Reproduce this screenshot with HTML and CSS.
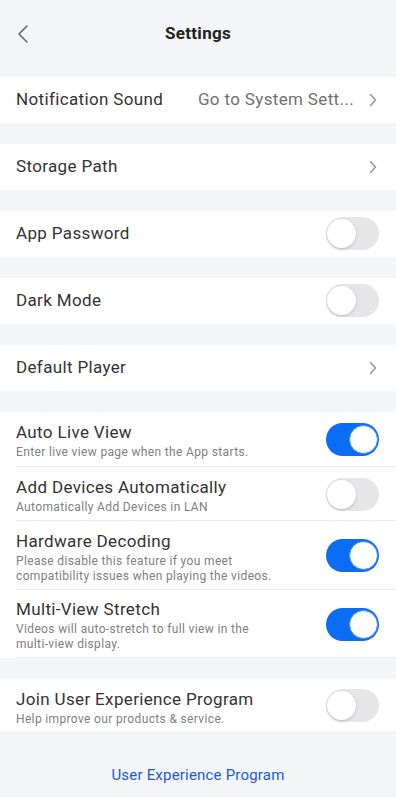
FILE: index.html
```html
<!DOCTYPE html>
<html>
<head>
<meta charset="utf-8">
<link rel="stylesheet" href="styles.css">
</head>
<body>
<div class="page">
  <header class="header">
    <svg class="back" width="12" height="20" viewBox="0 0 12 20"><path d="M10 2 L2 10 L10 18" fill="none" stroke="#666" stroke-width="1.6" stroke-linecap="round" stroke-linejoin="round"/></svg>
    <div class="title">Settings</div>
  </header>

  <section class="group">
    <div class="row">
      <span class="label">Notification Sound</span>
      <span class="value">Go to System Sett...</span>
      <svg class="chev" width="8" height="14" viewBox="0 0 8 14"><path d="M1.5 1.5 L6.5 7 L1.5 12.5" fill="none" stroke="#9896a6" stroke-width="1.6" stroke-linecap="round" stroke-linejoin="round"/></svg>
    </div>
  </section>

  <section class="group">
    <div class="row">
      <span class="label">Storage Path</span>
      <svg class="chev" width="8" height="14" viewBox="0 0 8 14"><path d="M1.5 1.5 L6.5 7 L1.5 12.5" fill="none" stroke="#9896a6" stroke-width="1.6" stroke-linecap="round" stroke-linejoin="round"/></svg>
    </div>
  </section>

  <section class="group">
    <div class="row">
      <span class="label">App Password</span>
      <span class="toggle"><span class="knob"></span></span>
    </div>
  </section>

  <section class="group">
    <div class="row">
      <span class="label">Dark Mode</span>
      <span class="toggle"><span class="knob"></span></span>
    </div>
  </section>

  <section class="group">
    <div class="row">
      <span class="label">Default Player</span>
      <svg class="chev" width="8" height="14" viewBox="0 0 8 14"><path d="M1.5 1.5 L6.5 7 L1.5 12.5" fill="none" stroke="#9896a6" stroke-width="1.6" stroke-linecap="round" stroke-linejoin="round"/></svg>
    </div>
  </section>

  <section class="group">
    <div class="row tall r1 divided">
      <div class="text">
        <div class="label">Auto Live View</div>
        <div class="sub">Enter live view page when the App starts.</div>
      </div>
      <span class="toggle on"><span class="knob"></span></span>
    </div>
    <div class="row tall r2 divided">
      <div class="text">
        <div class="label">Add Devices Automatically</div>
        <div class="sub">Automatically Add Devices in LAN</div>
      </div>
      <span class="toggle"><span class="knob"></span></span>
    </div>
    <div class="row tall r3 divided">
      <div class="text">
        <div class="label">Hardware Decoding</div>
        <div class="sub">Please disable this feature if you meet<br>compatibility issues when playing the videos.</div>
      </div>
      <span class="toggle on"><span class="knob"></span></span>
    </div>
    <div class="row tall r4 divided">
      <div class="text">
        <div class="label">Multi-View Stretch</div>
        <div class="sub">Videos will auto-stretch to full view in the<br>multi-view display.</div>
      </div>
      <span class="toggle on"><span class="knob"></span></span>
    </div>
  </section>

  <section class="group">
    <div class="row tall r5">
      <div class="text">
        <div class="label">Join User Experience Program</div>
        <div class="sub">Help improve our products &amp; service.</div>
      </div>
      <span class="toggle"><span class="knob"></span></span>
    </div>
  </section>

  <div class="footer">
    <a class="link">User Experience Program</a>
  </div>
</div>
</body>
</html>
```

FILE: styles.css
```css
* { box-sizing: border-box; }
html, body {
  margin: 0;
  padding: 0;
  background: #f4f5f7;
  font-family: Roboto, "Liberation Sans", sans-serif;
  color: #222;
}
.page {
  width: 396px;
  min-height: 797px;
  display: flex;
  flex-direction: column;
}
.header {
  height: 77px;
  display: flex;
  align-items: flex-start;
  justify-content: center;
  position: relative;
}
.back {
  position: absolute;
  left: 17px;
  top: 24px;
}
.title {
  margin-top: 23px;
  font-size: 17px;
  font-weight: 700;
  line-height: 20px;
  letter-spacing: 0.3px;
  color: #222;
}
.group {
  background: #fff;
  margin-bottom: 21px;
}
.row {
  height: 46px;
  padding-left: 16px;
  padding-right: 18px;
  padding-bottom: 2px;
  display: flex;
  align-items: center;
}
.row .label {
  font-size: 17px;
  line-height: 22px;
  letter-spacing: 0.35px;
  color: #333;
  flex: 1;
}
.row .value {
  font-size: 17px;
  letter-spacing: 0.35px;
  color: #707070;
  margin-right: 15px;
}
.chev { display: block; margin-right: 1px; margin-top: 2px; }
.row.tall { height: auto; padding-bottom: 0; }
.r1 { height: 55px !important; }
.r2 { height: 54px !important; }
.r3 { height: 69px !important; }
.r4 { height: 68px !important; }
.r5 { height: 52px !important; }
.tall .text { padding-top: 2px; }
.r5 .text { padding-top: 5px; }
.row.divided { position: relative; }
.row.divided::after {
  content: "";
  position: absolute;
  left: 16px;
  right: 0;
  bottom: 0;
  height: 1px;
  background: #ececee;
}
.text { flex: 1; }
.text .label { display: block; }
.sub {
  font-size: 12px;
  line-height: 15px;
  letter-spacing: 0.35px;
  color: #808080;
  margin-top: 2px;
}
.toggle {
  width: 53px;
  height: 33px;
  border-radius: 17px;
  background: #e6e6e8;
  position: relative;
  flex: none;
  margin-right: -1px;
}
.toggle .knob {
  position: absolute;
  left: 1px;
  top: 2px;
  width: 29px;
  height: 29px;
  border-radius: 50%;
  background: #fff;
  box-shadow: 0 1px 3px rgba(0,0,0,0.2);
}
.toggle.on { background: #0b6cf4; }
.toggle.on .knob {
  left: auto;
  right: 1px;
  box-shadow: none;
  border: 1px solid #3b86f0;
}
.footer {
  margin-top: 13px;
  display: flex;
  justify-content: center;
}
.link {
  font-size: 15px;
  color: #1c5bd3;
  line-height: 20px;
  letter-spacing: 0.2px;
}
```
